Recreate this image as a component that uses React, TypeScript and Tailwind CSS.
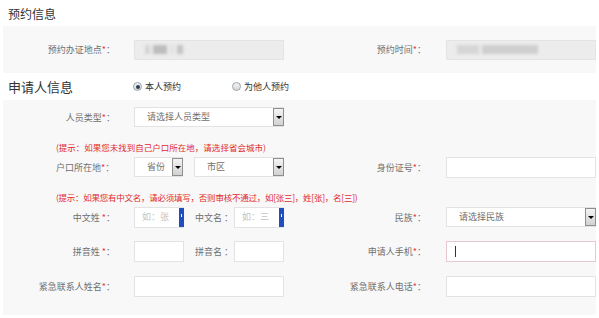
import React from "react";

const font = { fontFamily: '"Noto Sans CJK SC", "Noto Sans", sans-serif' };

function Label({ text, star = true, space = false, w = "w-[112px]" }: { text: string; star?: boolean; space?: boolean; w?: string }) {
  return (
    <div className={`${w} shrink-0 text-right text-[9px] text-[#6f6f6f] leading-none`}>
      {text}
      {space && " "}
      {star && <span className="text-[#e4393c]">*</span>}
      ：
    </div>
  );
}

function Arrow() {
  return (
    <div className="w-[11px] h-full shrink-0 border border-[#8f8f8f] bg-gradient-to-b from-[#f4f4f4] to-[#d2d2d2] flex items-center justify-center">
      <div className="w-0 h-0 border-l-[3px] border-r-[3px] border-t-[3px] border-l-transparent border-r-transparent border-t-black" />
    </div>
  );
}

function Select({ text, w }: { text: string; w: string }) {
  return (
    <div className={`${w} h-[20px] flex bg-white border border-[#e3e3e3] border-r-0`}>
      <div className="flex-1 flex items-center pl-[12px] text-[9px] text-[#6f6f6f]">{text}</div>
      <Arrow />
    </div>
  );
}

function Input({ w = "w-[150px]", className = "" }: { w?: string; className?: string }) {
  return <div className={`${w} h-[21px] bg-white border border-[#e3e3e3] ${className}`} />;
}

function NameInput({ ph }: { ph: string }) {
  return (
    <div className="w-[50px] h-[21px] flex bg-white border border-[#e3e3e3] border-r-0">
      <div className="flex-1 flex items-center pl-[7px] text-[9px] text-[#c4c4c4]">{ph}</div>
      <div className="w-[5px] h-full bg-[#1f4fbf] flex justify-center pt-[6px]">
        <div className="w-[1px] h-[3px] bg-white" />
      </div>
    </div>
  );
}

// redacted content in the reference is blurred
function Blur({ blobs }: { blobs: { w: number; c: string }[] }) {
  return (
    <div className="w-[150px] h-[20px] bg-[#ececec] border border-[#e4e4e4] flex items-center gap-[3px] pl-[10px]">
      {blobs.map((b, i) => (
        <div key={i} className="h-[9px] blur-[1.5px]" style={{ width: b.w, background: b.c }} />
      ))}
    </div>
  );
}

function Radio({ checked, text }: { checked?: boolean; text: string }) {
  return (
    <div className="flex items-center gap-[3px]">
      <div className="w-[9px] h-[9px] rounded-full border border-[#9aa3ad] bg-gradient-to-b from-[#f4f4f4] to-[#d8d8d8] flex items-center justify-center">
        {checked && <div className="w-[4px] h-[4px] rounded-full bg-[#2c3e57]" />}
      </div>
      <span className="text-[9px] text-[#333] leading-none">{text}</span>
    </div>
  );
}

function Hint({ text, tight }: { text: string; tight?: boolean }) {
  return (
    <div className={`pl-[53px] mt-[15px] mb-[4px] h-[11px] text-[8.5px] leading-[11px] text-[#e22b2b] ${tight ? "tracking-[-0.25px]" : ""}`}>
      {text}
    </div>
  );
}

export default function App() {
  return (
    <div className="w-[599px] h-[318px] bg-white overflow-hidden" style={font}>
      <div className="pl-[8px] pt-[7px] h-[26px] text-[12px] leading-[14px] text-[#333]">预约信息</div>

      {/* 预约信息 */}
      <div className="mx-[3px] h-[47px] bg-[#f8f8f8] flex items-center">
        <Label text="预约办证地点" />
        <div className="ml-[19px]">
          <Blur
            blobs={[
              { w: 5, c: "#d4d4d4" },
              { w: 14, c: "#bdbdbd" },
              { w: 4, c: "#e2e2e2" },
              { w: 6, c: "#c4c4c4" },
            ]}
          />
        </div>
        <Label text="预约时间" w="w-[142px]" />
        <div className="ml-[20px]">
          <Blur
            blobs={[
              { w: 22, c: "#d6d6d6" },
              { w: 56, c: "#cfcfcf" },
            ]}
          />
        </div>
      </div>

      {/* 申请人信息 */}
      <div className="h-[27px] flex items-center">
        <div className="pl-[8px] w-[133px] text-[13px] text-[#333] leading-none">申请人信息</div>
        <div className="w-[99px]">
          <Radio checked text="本人预约" />
        </div>
        <Radio text="为他人预约" />
      </div>

      <div className="mx-[3px] h-[215px] bg-[#f8f8f8] pt-[7px]">
        <div className="flex items-center h-[20px]">
          <Label text="人员类型" />
          <div className="ml-[19px]">
            <Select text="请选择人员类型" w="w-[150px]" />
          </div>
        </div>

        <Hint text="(提示：如果您未找到自己户口所在地，请选择省会城市)" />

        <div className="flex items-center h-[20px]">
          <div className="w-[112px] shrink-0 pl-[53px] text-[9px] text-[#6f6f6f] leading-none">
            户口所在地<span className="text-[#e4393c]">*</span>：
          </div>
          <div className="ml-[19px] w-[150px] flex gap-[11px]">
            <Select text="省份" w="w-[49px]" />
            <Select text="市区" w="w-[90px]" />
          </div>
          <Label text="身份证号" w="w-[142px]" />
          <div className="ml-[20px]">
            <Input />
          </div>
        </div>

        <Hint tight text="(提示：如果您有中文名，请必须填写，否则审核不通过，如[张三]，姓[张]，名[三])" />

        <div className="flex items-center h-[20px]">
          <Label text="中文姓" space />
          <div className="ml-[19px] w-[150px] flex items-center">
            <NameInput ph="如：张" />
            <Label text="中文名" space star={false} w="w-[50px] pr-[1px]" />
            <NameInput ph="如：三" />
          </div>
          <Label text="民族" w="w-[142px]" />
          <div className="ml-[20px]">
            <Select text="请选择民族" w="w-[150px]" />
          </div>
        </div>

        <div className="flex items-center h-[21px] mt-[14px]">
          <Label text="拼音姓" space />
          <div className="ml-[19px] w-[150px] flex items-center">
            <Input w="w-[50px]" />
            <Label text="拼音名" space star={false} w="w-[50px] pr-[1px]" />
            <Input w="w-[50px]" />
          </div>
          <Label text="申请人手机" w="w-[142px]" />
          <div className="ml-[20px]">
            <div className="w-[150px] h-[21px] bg-white border border-[#e6c9cd] flex items-center pl-[8px]">
              <div className="w-[1px] h-[11px] bg-[#333]" />
            </div>
          </div>
        </div>

        <div className="flex items-center h-[21px] mt-[14px]">
          <Label text="紧急联系人姓名" />
          <div className="ml-[19px]">
            <Input />
          </div>
          <Label text="紧急联系人电话" w="w-[142px]" />
          <div className="ml-[20px]">
            <Input />
          </div>
        </div>
      </div>
    </div>
  );
}
